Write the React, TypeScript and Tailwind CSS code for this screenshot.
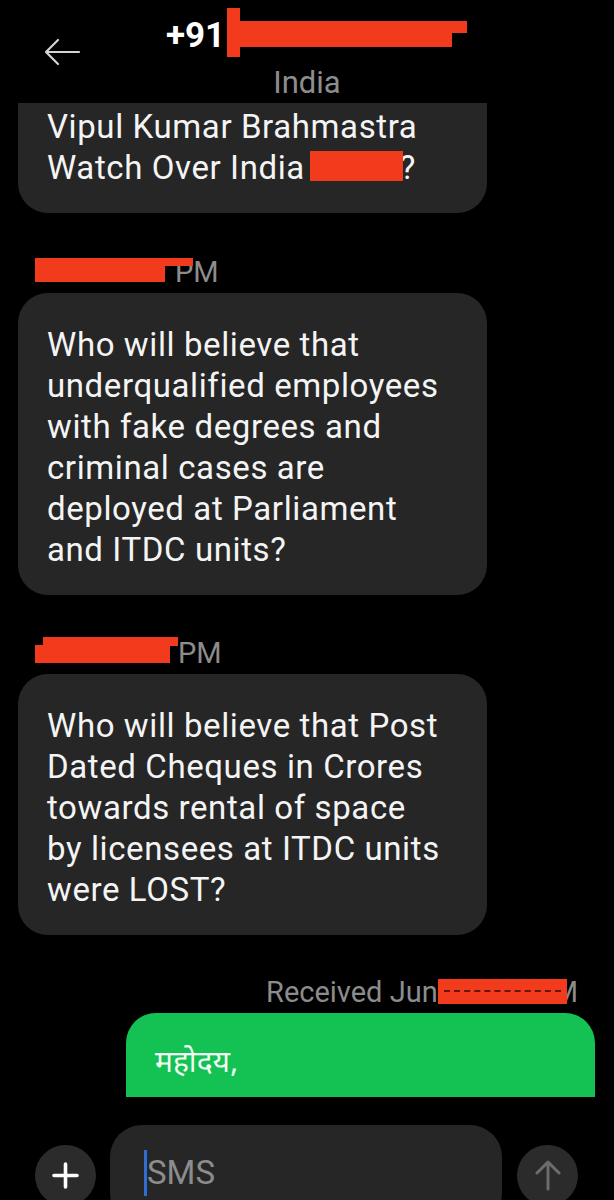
import React from "react";

const RED = "bg-[#f23a1c]";

function Redact({ width, rects }: { width: number; rects: { l: number; t: number; w: number; h: number }[] }) {
  // blanked-out text, drawn as red blocks over the hidden part
  return (
    <span className="relative inline-block align-top" style={{ width }}>
      {rects.map((r, i) => (
        <span
          key={i}
          className={`absolute ${RED}`}
          style={{ left: r.l, top: r.t, width: r.w, height: r.h }}
        />
      ))}
    </span>
  );
}

function Bubble({ lines, className = "" }: { lines: React.ReactNode[]; className?: string }) {
  return (
    <div
      className={`w-[469px] rounded-[30px] bg-[#262626] pb-[25px] pl-[29px] pt-[31px] text-[33px] leading-[41px] tracking-[0.6px] text-[#f4f4f4] ${className}`}
    >
      {lines.map((line, i) => (
        <div key={i} className="whitespace-nowrap">
          {line}
        </div>
      ))}
    </div>
  );
}

function Stamp({ children, right = false, className = "" }: { children: React.ReactNode; right?: boolean; className?: string }) {
  return (
    <div
      className={`flex h-[34px] whitespace-nowrap text-[29px] leading-[34px] text-[#8c8c8c] ${right ? "justify-end pr-[18px]" : "pl-[17px]"} ${className}`}
    >
      {children}
    </div>
  );
}

export default function App() {
  return (
    <div className="flex h-[1200px] w-[614px] flex-col overflow-hidden bg-black font-['Roboto','Liberation_Sans',sans-serif]">
      <header className="grid h-[103px] shrink-0 grid-cols-[1fr_auto_1fr]">
        <div className="pl-[44px] pt-[38px]">
          <svg width="37" height="28" viewBox="0 0 37 28" fill="none" stroke="#d4d4d4" strokeWidth="2.2" strokeLinecap="round" strokeLinejoin="round">
            <path d="M35 14H2M14 2L2 14l12 12" />
          </svg>
        </div>
        <div className="flex flex-col items-center pt-[16px]">
          <div className="flex h-[40px] pl-[17px] text-[35px] font-bold leading-[40px] text-white">
            <span>+91</span>
            <Redact
              width={240}
              rects={[
                { l: 2, t: 5, w: 240, h: 12 },
                { l: 2, t: 15, w: 225, h: 16 },
                { l: 2, t: -8, w: 13, h: 49 },
              ]}
            />
          </div>
          <div className="mt-[9px] text-[31px] leading-[36px] text-[#8d8d8d]">India</div>
        </div>
        <div />
      </header>

      <main className="flex-1 overflow-hidden px-[18px]">
        <Bubble
          className="-mt-[28px]"
          lines={[
            "Vipul Kumar Brahmastra",
            <>
              Watch Over India{" "}
              <Redact width={86} rects={[{ l: -4, t: 4, w: 93, h: 30 }]} />?
            </>,
          ]}
        />

        <Stamp className="mt-[42px]">
          <Redact width={137} rects={[{ l: 0, t: 3, w: 158, h: 8 }, { l: 0, t: 10, w: 130, h: 17 }]} />
          <span className="ml-[3px]">PM</span>
        </Stamp>
        <Bubble
          className="mt-[4px]"
          lines={[
            "Who will believe that",
            "underqualified employees",
            "with fake degrees and",
            "criminal cases are",
            "deployed at Parliament",
            "and ITDC units?",
          ]}
        />

        <Stamp className="mt-[41px]">
          <Redact
            width={143}
            rects={[
              { l: 8, t: 1, w: 135, h: 9 },
              { l: 0, t: 9, w: 135, h: 18 },
            ]}
          />
          <span>PM</span>
        </Stamp>
        <Bubble
          className="mt-[4px]"
          lines={[
            "Who will believe that Post",
            "Dated Cheques in Crores",
            "towards rental of space",
            "by licensees at ITDC units",
            "were LOST?",
          ]}
        />

        <Stamp right className="mt-[40px]">
          <span>Received Jun</span>
          <span className="relative inline-block">
            <span className="inline-block w-[115px]" />M
            <span className={`absolute left-0 top-[4px] h-[25px] w-[129px] ${RED}`}>
              <span className="absolute left-[6px] right-[6px] top-[11px] border-t-2 border-dashed border-black/60" />
            </span>
          </span>
        </Stamp>
        <div className="ml-[108px] mt-[4px] h-[120px] w-[469px] rounded-[30px] bg-[#14c153] pl-[29px] pt-[31px] font-['Noto_Sans_Devanagari','Noto_Sans',sans-serif] text-[30px] leading-[41px] text-[#f2fff4]">
          महोदय,
        </div>
      </main>

      <footer className="h-[103px] shrink-0 bg-black pt-[28px]">
        <div className="flex h-[100px] items-center pl-[35px]">
          <div className="flex h-[61px] w-[61px] shrink-0 items-center justify-center rounded-full bg-[#2b2b2b]">
            <svg width="27" height="27" viewBox="0 0 27 27" stroke="#ffffff" strokeWidth="3.6" strokeLinecap="round">
              <path d="M13.5 2v23M2 13.5h23" />
            </svg>
          </div>
          <div className="ml-[14px] flex h-[100px] w-[392px] items-center rounded-[32px] bg-[#262626] pb-[4px] pl-[34px]">
            <span className="h-[46px] w-[3px] bg-[#2f6ed2]" />
            <span className="text-[33px] leading-[40px] text-[#8c8c8c]">SMS</span>
          </div>
          <div className="ml-[15px] flex h-[61px] w-[61px] shrink-0 items-center justify-center rounded-full bg-[#2b2b2b]">
            <svg width="26" height="32" viewBox="0 0 26 32" fill="none" stroke="#6c6c6c" strokeWidth="3" strokeLinecap="round" strokeLinejoin="round">
              <path d="M13 30V3M2 14L13 3l11 11" />
            </svg>
          </div>
        </div>
      </footer>
    </div>
  );
}
